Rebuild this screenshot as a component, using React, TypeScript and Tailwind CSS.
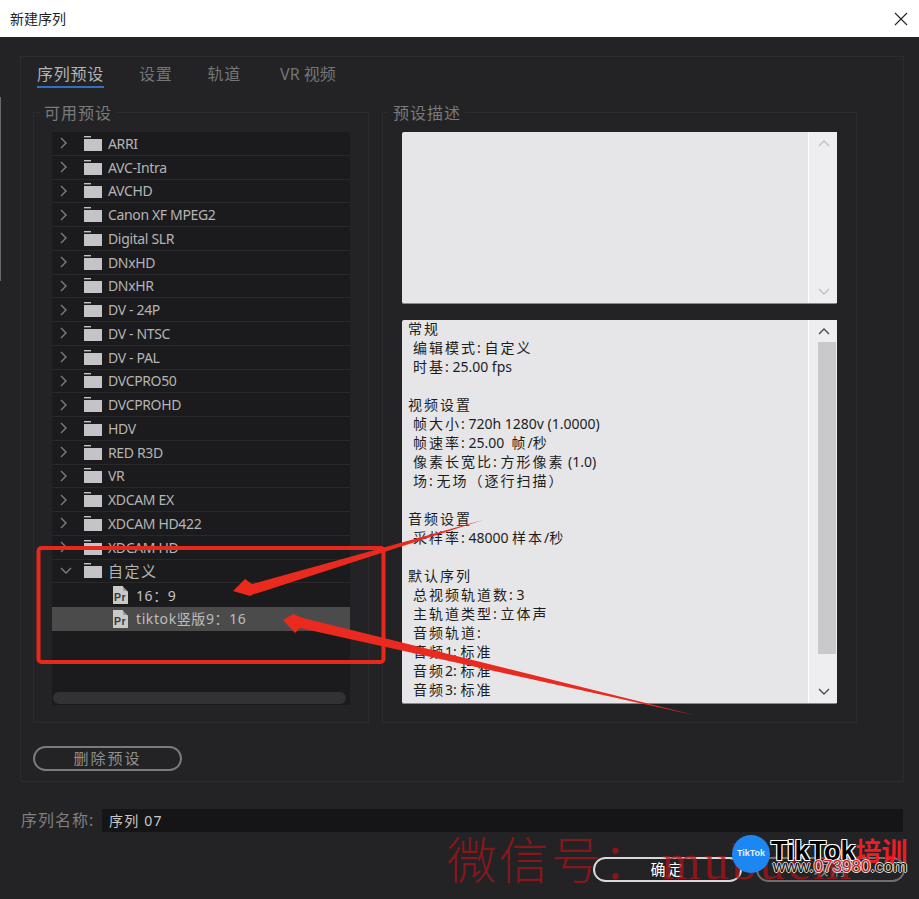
import React from 'react';

const cjk = "font-['Noto_Sans','Noto_Sans_CJK_SC',sans-serif]";

const presets = [
  'ARRI', 'AVC-Intra', 'AVCHD', 'Canon XF MPEG2', 'Digital SLR', 'DNxHD', 'DNxHR', 'DV - 24P', 'DV - NTSC',
  'DV - PAL', 'DVCPRO50', 'DVCPROHD', 'HDV', 'RED R3D', 'VR', 'XDCAM EX', 'XDCAM HD422', 'XDCAM HD',
];

const summary: [string, boolean][] = [
  ['常规', false],
  ['编辑模式: 自定义', true],
  ['时基: 25.00 fps', true],
  ['', false],
  ['视频设置', false],
  ['帧大小: 720h 1280v (1.0000)', true],
  ['帧速率: 25.00  帧/秒', true],
  ['像素长宽比: 方形像素 (1.0)', true],
  ['场: 无场（逐行扫描）', true],
  ['', false],
  ['音频设置', false],
  ['采样率: 48000 样本/秒', true],
  ['', false],
  ['默认序列', false],
  ['总视频轨道数: 3', true],
  ['主轨道类型: 立体声', true],
  ['音频轨道:', true],
  ['音频1: 标准', true],
  ['音频2: 标准', true],
  ['音频3: 标准', true],
];

function Chevron({ dir, color }: { dir: 'right' | 'down' | 'up'; color: string }) {
  const d = dir === 'right' ? 'M1 1l5 5-5 5' : dir === 'down' ? 'M1 1l5 5 5-5' : 'M1 6l5-5 5 5';
  const size = dir === 'right' ? 'w-[7px] h-[12px]' : 'w-[12px] h-[7px]';
  const box = dir === 'right' ? '0 0 7 12' : '0 0 12 7';
  return (
    <svg className={size} viewBox={box} fill="none" stroke={color} strokeWidth="1.4">
      <path d={d} />
    </svg>
  );
}

function Folder() {
  return (
    <svg className="w-[18px] h-[15px] shrink-0" viewBox="0 0 18 15" fill="#c4c3c7">
      <path d="M0 0h7v1.4H0z" />
      <path d="M0 3h18v12H0z" />
    </svg>
  );
}

function PrFile() {
  return (
    <svg className="w-[15px] h-[18px] shrink-0" viewBox="0 0 15 18">
      <path d="M0 0h9.5L15 5.5V18H0z" fill="#c9c9c9" />
      <path d="M10.3 0L15 4.7h-4.7z" fill="#1c1c1e" opacity="0.35" />
      <text x="1" y="15" fontSize="10.5" fontFamily="'Liberation Sans', sans-serif" fontWeight="700" fill="#3a3a3a">
        Pr
      </text>
    </svg>
  );
}

function FolderRow({ name, open }: { name: string; open?: boolean }) {
  return (
    <div className="h-[23.75px] flex items-center border-b border-[#29292b] text-[14px] text-[#b4b4b4] pl-[8px]">
      <div className="w-[24px] flex">
        <Chevron dir={open ? 'down' : 'right'} color="#7d7d7d" />
      </div>
      <Folder />
      <span className={`ml-[6px] ${open ? 'tracking-[1.5px] text-[15px]' : 'tracking-[-0.35px]'}`}>{name}</span>
    </div>
  );
}

function FileRow({ name, active }: { name: string; active?: boolean }) {
  return (
    <div className={`h-[23.75px] flex items-center pl-[61px] text-[14px] tracking-[0.6px] ${active ? 'bg-[#4b4b4c] text-[#bdbdbd]' : 'text-[#c4c4c4]'}`}>
      <PrFile />
      <span className="ml-[8px] whitespace-pre">{name}</span>
    </div>
  );
}

function GroupBox({ label, className, children }: { label: string; className: string; children: React.ReactNode }) {
  return (
    <div className={`border border-[#2c2c2e] h-[611px] ${className}`}>
      <div className="-mt-[10px] ml-[6px] w-fit px-[4px] h-[20px] leading-[20px] bg-[#232325] text-[16px] tracking-[1px] text-[#7a7a7a]">
        {label}
      </div>
      {children}
    </div>
  );
}

function PillButton({ label, className }: { label: string; className: string }) {
  return (
    <div className={`w-[149px] h-[25px] rounded-full border-2 flex items-center justify-center text-[15px] tracking-[2px] ${className}`}>
      {label}
    </div>
  );
}

// Han runs are spaced wide, latin runs stay tight, as in the reference
function SummaryLine({ text }: { text: string }) {
  const parts = text.split(/([\u4e00-\u9fff（）]+)/).filter(Boolean);
  return (
    <>
      {parts.map((part, i) => (
        <span key={i} className={/[\u4e00-\u9fff（）]/.test(part) ? 'tracking-[2px]' : 'tracking-[0px]'}>
          {part}
        </span>
      ))}
    </>
  );
}

function TextPanel({ lines, dark, height }: { lines: [string, boolean][]; dark?: boolean; height: string }) {
  return (
    <div className={`w-[435px] ${height} bg-[#e6e6e8] rounded-[2px] flex border-b border-[#8a8a8a]`}>
      <div className="flex-1 pl-[6px] text-[14px] leading-[19px] text-[#1d1d1d] overflow-hidden whitespace-pre">
        {lines.map(([text, indent], i) => (
          <div key={i} className={`h-[19px] -translate-y-[1px] ${indent ? 'pl-[5px]' : ''}`}>
            <SummaryLine text={text} />
          </div>
        ))}
      </div>
      <div className="w-[29px] bg-[#eeeef0] border-l border-white flex flex-col items-center pt-[8px] pb-[8px] pl-[1px]">
        <Chevron dir="up" color={dark ? '#4b4b4b' : '#c2c2c4'} />
        {dark ? (
          <div className="mt-[7px] w-[18px] h-[312px] ml-[6px] bg-[#c9c9cc]" />
        ) : null}
        <div className="mt-auto">
          <Chevron dir="down" color={dark ? '#4b4b4b' : '#c2c2c4'} />
        </div>
      </div>
    </div>
  );
}

export default function App() {
  return (
    <div className={`relative w-[919px] h-[899px] overflow-hidden bg-[#232325] ${cjk}`}>
      {/* Title bar */}
      <div className="h-[37px] bg-white flex items-center justify-between pl-[10px] pr-[11px] text-[14px] text-[#222]">
        <span>新建序列</span>
        <svg className="w-[14px] h-[14px]" viewBox="0 0 14 14" stroke="#222" strokeWidth="1.1">
          <path d="M1 1l12 12M13 1L1 13" />
        </svg>
      </div>

      <div className="absolute left-0 top-[97px] w-[1px] h-[184px] bg-[#6a6a6a]" />

      {/* Main panel */}
      <div className="ml-[20px] mt-[19px] w-[884px] h-[726px] border border-[#2c2c2e] pl-[12px]">
        <div className="h-[55px] flex items-start gap-[35px] pl-[4px] pt-[5px] text-[16px] tracking-[0.75px] text-[#757575]">
          <div className="h-[26px] leading-[24px] border-b-[2px] border-[#2f6fc4] text-[#b4b4b4]">序列预设</div>
          <div className="leading-[24px]">设置</div>
          <div className="leading-[24px]">轨道</div>
          <div className="leading-[24px] ml-[4px] tracking-[0px]">VR 视频</div>
        </div>

        <div className="flex gap-[13px]">
          <GroupBox label="可用预设" className="w-[336px]">
            <div className="ml-[18px] mt-[9px] w-[298px] h-[573px] bg-[#1b1b1d] flex flex-col">
              {presets.map((name) => (
                <FolderRow key={name} name={name} />
              ))}
              <FolderRow name="自定义" open />
              <FileRow name="16：9" />
              <FileRow name="tiktok竖版9：16" active />
              <div className="mt-auto mx-[1px] mr-[4px] mb-[1px] h-[12px] rounded-full bg-[#323234]" />
            </div>
          </GroupBox>

          <GroupBox label="预设描述" className="w-[475px]">
            <div className="ml-[19px] mt-[9px] flex flex-col gap-[16px]">
              <TextPanel lines={[]} height="h-[172px]" />
              <TextPanel lines={summary} dark height="h-[384px]" />
            </div>
          </GroupBox>
        </div>

        <PillButton label="删除预设" className="mt-[23px] border-[#7b7b7b] text-[#8f8f8f]" />
      </div>

      {/* Sequence name */}
      <div className="mt-[26px] ml-[21px] flex items-center h-[24px]">
        <span className="w-[81px] text-[16px] tracking-[1px] text-[#7f7f7f]">序列名称:</span>
        <div className="w-[801px] h-[23px] bg-[#151517] pl-[7px] flex items-center text-[14px] tracking-[1.2px] text-[#c8c8c8]">
          序列 07
        </div>
      </div>

      {/* Footer buttons */}
      <div className="mt-[25px] ml-[593px] flex gap-[14px]">
        <PillButton label="确定" className="border-[#d8d8d8] text-white" />
        <PillButton label="取消" className="border-[#6f6f6f] text-[#8a8a8a]" />
      </div>

      {/* Watermark */}
      <div className="absolute left-[447px] top-[825px] h-[70px] leading-[70px] text-[50px] font-extralight tracking-[2px] text-[#a8141a]/75 whitespace-pre">
        微信号：<span className="ml-[7px] font-['Liberation_Serif',serif] tracking-[3px]">mubucm</span>
      </div>

      {/* TikTok logo */}
      <div className="absolute left-[732px] top-[835px] w-[38px] h-[38px] rounded-full bg-[#1c86f2] flex items-center justify-center text-[9px] font-bold text-[#e8f2ff] font-['Liberation_Sans',sans-serif]">
        TikTok
      </div>
      <div className="absolute left-[771px] top-[836px] flex items-center h-[30px] whitespace-pre">
        <span className="text-[27px] font-bold leading-[30px] text-black font-['Liberation_Sans',sans-serif] [text-shadow:1px_1px_0_#fff,-1px_-1px_0_#fff,1px_-1px_0_#fff,-1px_1px_0_#fff]">
          TikTok
        </span>
        <span className="text-[26px] font-bold leading-[30px] text-[#ee1c25]">培训</span>
      </div>
      <div className="absolute left-[773px] top-[858px] h-[18px] leading-[18px] text-[17px] text-[#111] font-['Liberation_Sans',sans-serif] [text-shadow:1px_0_0_#ddd,-1px_0_0_#ddd,0_1px_0_#ddd,0_-1px_0_#ddd] whitespace-pre">
        www.<span className="text-[#d01c22]">073980</span>.com
      </div>

      {/* Red annotations */}
      <svg className="absolute inset-0 w-[919px] h-[899px] pointer-events-none" viewBox="0 0 919 899" fill="#ea2a1f">
        <rect x="38.5" y="548" width="345" height="114" rx="3" fill="none" stroke="#e5291f" strokeWidth="4" />
        <path d="M233 591L245 579L252 584L483 520L258 593L254 594L250 596z" />
        <path d="M283 620L293 614L303 618L698 716L300 628L295 633z" />
      </svg>
    </div>
  );
}
